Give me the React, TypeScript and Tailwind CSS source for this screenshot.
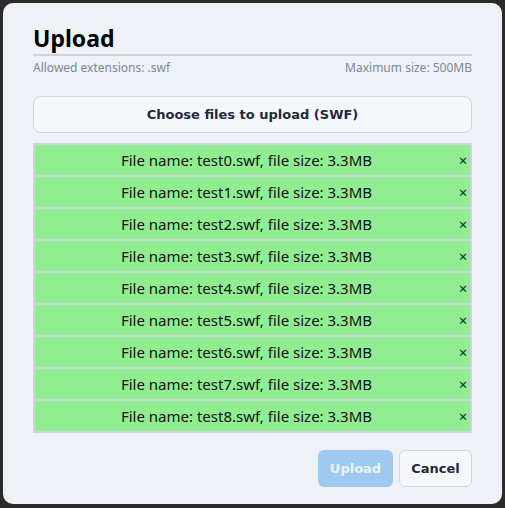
import React from "react";

const files = Array.from({ length: 9 }, (_, i) => ({
  name: `test${i}.swf`,
  size: "3.3MB",
}));

export default function App() {
  return (
    <div className="h-[508px] w-[505px] bg-[#2b2b2b] p-[3px]">
      <div className="flex h-[501px] flex-col rounded-[10px] bg-[#eef2f6] px-[30px] pt-[20px] font-['Noto_Sans',sans-serif] text-[#111]">
        <h1 className="text-[23px] font-bold leading-[30px] text-black">Upload</h1>
        <div className="mt-[1px] h-[2px] bg-[#cbd3de]" />
        <div className="mt-[4px] flex justify-between text-[12px] leading-[16px] text-[#7d8798]">
          <span>Allowed extensions: .swf</span>
          <span>Maximum size: 500MB</span>
        </div>

        <button className="mt-[20px] h-[37px] rounded-[8px] border border-[#cdd6e1] bg-[#f5f8fb] font-['DejaVu_Sans',sans-serif] text-[13px] font-bold text-[#1e293b]">
          Choose files to upload (SWF)
        </button>

        <ul className="mt-[10px] flex flex-col gap-[2px] border-2 border-[#cbd3de] bg-[#cbd3de]">
          {files.map((f) => (
            <li key={f.name} className="flex h-[30px] items-center bg-[#90ee90]">
              <span className="flex-1 text-center text-[15px]">
                File name: {f.name}, file size: {f.size}
              </span>
              <button className="mr-[2px] w-[10px] text-[15px] leading-none text-[#1a1a4a]">×</button>
            </li>
          ))}
        </ul>

        <div className="mt-[17px] flex justify-end gap-[6px] font-['DejaVu_Sans',sans-serif] text-[13px] font-bold">
          <button className="h-[37px] w-[75px] rounded-[6px] bg-[#9fc9ef] text-[#eaf3fc]">Upload</button>
          <button className="h-[37px] w-[73px] rounded-[6px] border border-[#cdd6e1] bg-[#f5f8fb] text-[#1e293b]">
            Cancel
          </button>
        </div>
      </div>
    </div>
  );
}
